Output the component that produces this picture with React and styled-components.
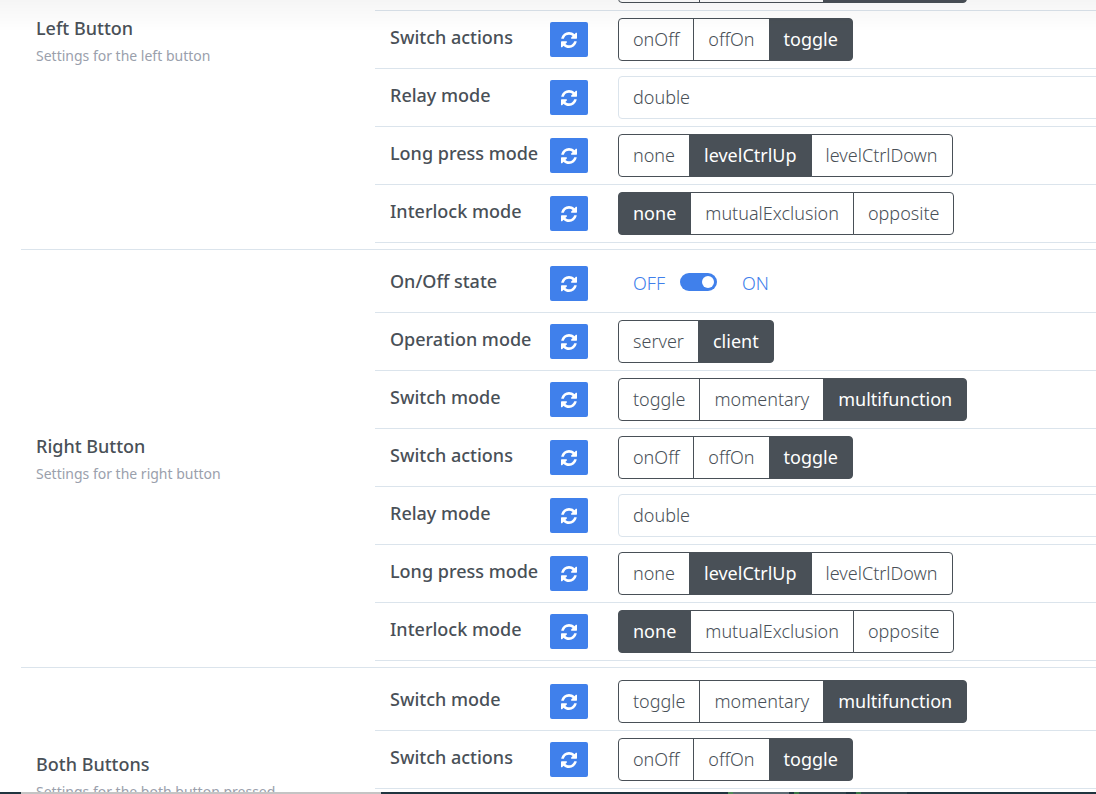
import React from "react";
import styled, { createGlobalStyle } from "styled-components";

const Global = createGlobalStyle`
  * { box-sizing: border-box; }
  body {
    margin: 0;
    background: #fff;
    color: #495057;
    font-family: "Noto Sans", "Open Sans", sans-serif;
    font-size: 18px;
    overflow: hidden;
  }
  button, select { font: inherit; color: inherit; }
`;

const Viewport = styled.div`
  height: 100vh;
  overflow: hidden;
  display: flex;
  flex-direction: column;
`;

const List = styled.main`
  flex: 1;
  min-height: 0;
  overflow: hidden;
  padding-left: 21px;
`;

const TopShade = styled.div`
  position: fixed;
  inset: 0 0 auto 0;
  height: 32px;
  background: linear-gradient(rgba(0, 0, 0, 0.04), transparent);
  pointer-events: none;
`;

const Section = styled.section`
  display: grid;
  grid-template-columns: 354px 1fr;
  margin-right: -20px;
  margin-top: ${(p) => (p.$scrolled ? "-52px" : "0")};
  padding: 5px 0 6px;
  border-bottom: 1px solid #dbe4ec;
`;

const Heading = styled.header`
  padding: ${(p) => p.$top}px 15px 0;
  line-height: 28px;
`;

const Title = styled.h2`
  margin: 0;
  font-size: 18px;
  line-height: 28px;
  font-weight: 500;
`;

const Description = styled.p`
  margin: 0;
  font-size: 14px;
  color: #9aa0ac;
`;

const Row = styled.div`
  display: grid;
  grid-template-columns: 160px 68px 1fr;
  height: 58px;
  padding: 7px 15px;
  border-bottom: 1px solid #dbe4ec;
`;

const Label = styled.div`
  font-weight: 500;
  line-height: 38px;
  white-space: nowrap;
`;

const Refresh = styled.button`
  display: flex;
  align-items: center;
  justify-content: center;
  width: 38px;
  height: 35px;
  margin-top: 4px;
  padding: 0;
  border: 0;
  border-radius: 2px;
  background: #4080eb;
  color: #fff;
`;

const Group = styled.div`
  display: flex;
  height: 43px;
`;

const Option = styled.button`
  padding: 0 14px 2px;
  border: 1px solid #495057;
  background: ${(p) => (p.$active ? "#495057" : "#fff")};
  color: ${(p) => (p.$active ? "#fff" : "#495057")};
  font-weight: ${(p) => (p.$active ? 400 : 300)};
  white-space: nowrap;
  & + & { margin-left: -1px; }
  &:first-child { border-radius: 4px 0 0 4px; }
  &:last-child { border-radius: 0 4px 4px 0; }
`;

const Select = styled.select`
  width: 100%;
  height: 43px;
  padding: 0 14px 2px;
  appearance: none;
  border: 1px solid #dbe4ec;
  border-radius: 4px;
  background: #fff;
  font-weight: 300;
`;

const SwitchLine = styled.label`
  display: flex;
  align-items: center;
  height: 42px;
  padding-left: 15px;
  color: #4080eb;
  font-weight: 300;
`;

const Toggle = styled.input`
  appearance: none;
  display: flex;
  justify-content: flex-end;
  width: 37px;
  height: 18px;
  margin: 0 25px 2px 15px;
  padding: 3px;
  border-radius: 9px;
  background: #4080eb;
  &::before {
    content: "";
    width: 12px;
    height: 12px;
    border-radius: 50%;
    background: #fff;
  }
`;

const Taskbar = styled.footer`
  display: flex;
  height: 2px;
  background: #20353f;
`;

const Segment = styled.span`
  width: ${(p) => p.$width}px;
  height: 2px;
  background: ${(p) => p.$color};
`;

const RefreshIcon = () => (
  <svg width="16" height="16" viewBox="0 0 1536 1536" fill="currentColor" aria-hidden="true">
    <path d="M1511 928q0 5-1 7-64 268-268 434.5t-478 166.5q-146 0-282.5-55t-243.5-157l-129 129q-19 19-45 19t-45-19-19-45v-448q0-26 19-45t45-19h448q26 0 45 19t19 45-19 45l-137 137q71 66 161 102t187 36q134 0 250-65t186-179q11-17 53-117 8-23 30-23h192q13 0 22.5 9.5t9.5 22.5zm25-800v448q0 26-19 45t-45 19h-448q-26 0-45-19t-19-45 19-45l138-138q-148-137-349-137-134 0-250 65t-186 179q-11 17-53 117-8 23-30 23h-199q-13 0-22.5-9.5t-9.5-22.5v-7q65-268 270-434.5t480-166.5q146 0 284 55.5t245 156.5l130-129q19-19 45-19t45 19 19 45z" />
  </svg>
);

const onOffState = { label: "On/Off state", kind: "switch" };
const operation = { label: "Operation mode", options: ["server", "client"], value: "client" };
const switchMode = { label: "Switch mode", options: ["toggle", "momentary", "multifunction"], value: "multifunction" };
const actions = { label: "Switch actions", options: ["onOff", "offOn", "toggle"], value: "toggle" };
const relay = { label: "Relay mode", kind: "select", value: "double" };
const longPress = { label: "Long press mode", options: ["none", "levelCtrlUp", "levelCtrlDown"], value: "levelCtrlUp" };
const interlock = { label: "Interlock mode", options: ["none", "mutualExclusion", "opposite"], value: "none" };

const sections = [
  {
    title: "Left Button",
    description: "Settings for the left button",
    top: 61,
    scrolled: true,
    rows: [switchMode, actions, relay, longPress, interlock],
  },
  {
    title: "Right Button",
    description: "Settings for the right button",
    top: 177,
    rows: [onOffState, operation, switchMode, actions, relay, longPress, interlock],
  },
  {
    title: "Both Buttons",
    description: "Settings for the both button pressed",
    top: 77,
    rows: [switchMode, actions],
  },
];

const segments = [
  [21, "#20353f"],
  [360, "#c4c4c4"],
  [347, "#20353f"],
  [5, "#4f8a58"],
  [56, "#5d6b73"],
  [5, "#20353f"],
  [5, "#3c7a48"],
  [47, "#34474f"],
  [10, "#20353f"],
  [5, "#3c7a48"],
  [46, "#34474f"],
];

function Control({ row }) {
  if (row.kind === "switch") {
    return (
      <SwitchLine>
        OFF
        <Toggle type="checkbox" role="switch" defaultChecked />
        ON
      </SwitchLine>
    );
  }
  if (row.kind === "select") {
    return (
      <Select aria-label={row.label} defaultValue={row.value}>
        <option>{row.value}</option>
      </Select>
    );
  }
  return (
    <Group role="group" aria-label={row.label}>
      {row.options.map((o) => (
        <Option key={o} type="button" $active={o === row.value} aria-pressed={o === row.value}>
          {o}
        </Option>
      ))}
    </Group>
  );
}

export default function App() {
  return (
    <Viewport>
      <Global />
      <List>
        {sections.map((s) => (
          <Section key={s.title} $scrolled={s.scrolled}>
            <Heading $top={s.top}>
              <Title>{s.title}</Title>
              <Description>{s.description}</Description>
            </Heading>
            <div>
              {s.rows.map((r) => (
                <Row key={r.label}>
                  <Label>{r.label}</Label>
                  <Refresh type="button" aria-label={`Refresh ${r.label}`}>
                    <RefreshIcon />
                  </Refresh>
                  <Control row={r} />
                </Row>
              ))}
            </div>
          </Section>
        ))}
      </List>
      <Taskbar>
        {segments.map(([w, c], i) => (
          <Segment key={i} $width={w} $color={c} />
        ))}
      </Taskbar>
      <TopShade />
    </Viewport>
  );
}
